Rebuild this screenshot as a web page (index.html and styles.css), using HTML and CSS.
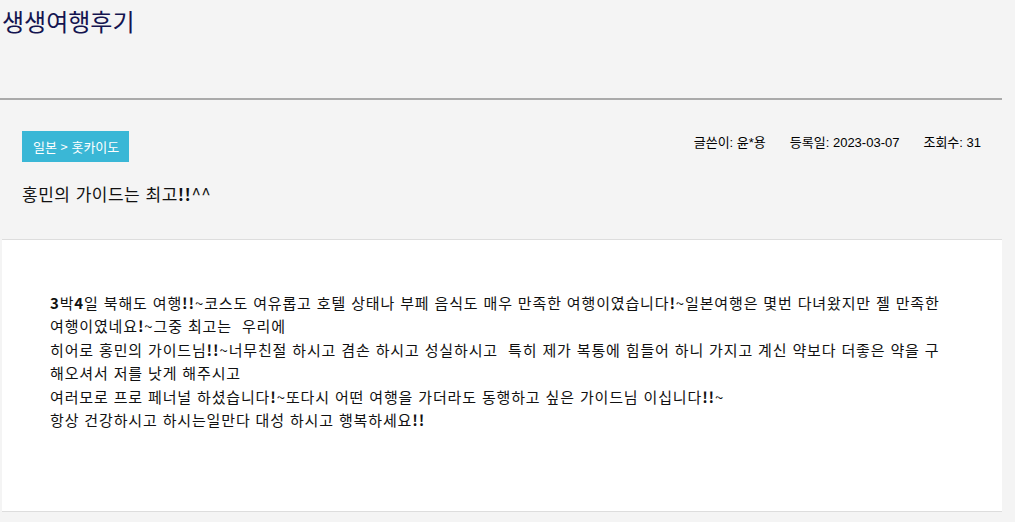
FILE: index.html
```html
<!DOCTYPE html>
<html lang="ko">

<head>
    <meta charset="utf-8">
    <title>생생여행후기</title>
    <link rel="stylesheet" href="styles.css">
</head>

<body>
    <div class="wrap">
        <h1 class="page-title">생생여행후기</h1>
        <div class="view">
            <div class="view-head">
                <div class="head-row">
                    <span class="badge">일본 &gt; 홋카이도</span>
                    <ul class="meta">
                        <li>글쓴이: 윤*용</li>
                        <li>등록일: 2023-03-07</li>
                        <li>조회수: 31</li>
                    </ul>
                </div>
                <h2 class="subject">홍민의 가이드는 최고<b>!!</b>^^</h2>
            </div>
            <div class="view-body">
                <p>
                    <b>3</b>박<b>4</b>일 북해도 여행<b>!!</b>~코스도 여유롭고 호텔 상태나 부페 음식도 매우 만족한 여행이였습니다<b>!</b>~일본여행은 몇번 다녀왔지만 젤 만족한 여행이였네요<b>!</b>~그중 최고는&nbsp; 우리에<br>
                    히어로 홍민의 가이드님<b>!!</b>~너무친절 하시고 겸손 하시고 성실하시고&nbsp; 특히 제가 복통에 힘들어 하니 가지고 계신 약보다 더좋은 약을 구해오셔서 저를 낫게 해주시고<br>
                    여러모로 프로 페너널 하셨습니다<b>!</b>~또다시 어떤 여행을 가더라도 동행하고 싶은 가이드님 이십니다<b>!!</b>~<br>
                    항상 건강하시고 하시는일만다 대성 하시고 행복하세요<b>!!</b>
                </p>
            </div>
        </div>
    </div>
</body>

</html>
```

FILE: styles.css
```css
html,
body {
    margin: 0;
    padding: 0;
}

body {
    background-color: #f4f4f4;
    color: #222;
    font-family: "Noto Sans CJK KR", "Liberation Sans", sans-serif;
}

.wrap {
    width: 1000px;
    margin-left: 2px;
}

.page-title {
    margin: 0 0 0 -2px;
    padding: 4px 0 0 2px;
    height: 94px;
    font-size: 24px;
    font-weight: normal;
    line-height: 34px;
    color: #141450;
    border-bottom: 2px solid #aaa;
}

.view-head {
    padding: 31px 20px 0;
    height: 108px;
}

.head-row {
    display: flex;
    justify-content: space-between;
    align-items: flex-start;
}

.badge {
    display: inline-block;
    background-color: #3ab7d6;
    color: #fff;
    font-size: 13px;
    line-height: 31px;
    padding: 0 10px 0 11px;
    height: 31px;
}

.meta {
    list-style: none;
    margin: 1px 1px 0 0;
    padding: 0;
    display: flex;
    gap: 24px;
    font-size: 13px;
    color: #000;
    font-family: "Liberation Sans", "Noto Sans CJK KR", sans-serif;
}

.subject {
    margin: 19px 0 0;
    font-size: 17px;
    letter-spacing: 0.5px;
    font-weight: normal;
    color: #111;
}

.view-body {
    background-color: #fff;
    border-top: 1px solid #ddd;
    border-bottom: 1px solid #ddd;
    height: 273px;
    padding: 0 57px 0 48px;
    box-sizing: border-box;
}

.view-body p {
    margin: 0;
    padding-top: 51px;
    font-size: 15px;
    letter-spacing: 0.85px;
    line-height: 23.4px;
    color: #111;
}
```
